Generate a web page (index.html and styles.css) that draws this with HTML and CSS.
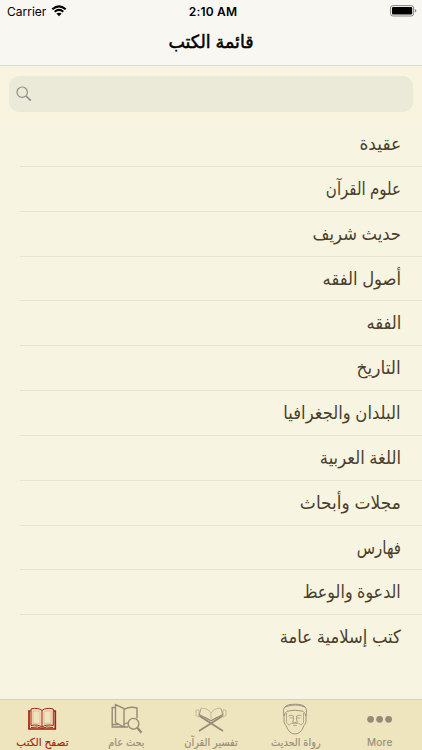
FILE: index.html
```html
<!DOCTYPE html>
<html lang="ar">
<head>
  <meta charset="UTF-8" />
  <meta name="viewport" content="width=device-width, initial-scale=1.0"/>
  <title>قائمة الكتب</title>
  <link rel="stylesheet" href="styles.css">
</head>
<body>
  <header class="header">
    <div class="status-bar">
      <div class="carrier">
        <span>Carrier</span>
        <svg class="wifi" viewBox="0 0 16 12" width="16" height="12">
          <path d="M1.3 4.2Q8-1.5 14.7 4.2M3.7 6.7Q8 3.2 12.3 6.7" fill="none" stroke="#000" stroke-width="2.1"/>
          <path d="M5.4 8.6Q8 6.7 10.6 8.6L8 11.2z"/>
        </svg>
      </div>
      <span class="time">2:10 AM</span>
      <div class="battery">
        <svg viewBox="0 0 27 12" width="27" height="12">
          <rect x=".6" y=".6" width="23" height="10.4" rx="2.3" fill="none" stroke="#858580"/>
          <rect x="2" y="2" width="20.2" height="7.6" rx="1"/>
          <path d="M24.9 4q1.5.5 1.5 1.8t-1.5 1.8z" fill="#858580"/>
        </svg>
      </div>
    </div>
    <h1 class="title" dir="rtl">قائمة الكتب</h1>
  </header>

  <div class="search">
    <div class="search-box">
      <svg viewBox="0 0 16 16" width="16" height="16" fill="none" stroke="#8e8e89">
        <circle cx="6.2" cy="6.2" r="5.2" stroke-width="1.2"/>
        <path d="M10 10l4.8 4.6" stroke-width="1.7"/>
      </svg>
    </div>
  </div>

  <ul class="list" dir="rtl">
    <li><span class="wide">عقيدة</span></li>
    <li><span class="narrow">علوم القرآن</span></li>
    <li><span>حديث شريف</span></li>
    <li><span>أصول الفقه</span></li>
    <li><span>الفقه</span></li>
    <li><span class="wide">التاريخ</span></li>
    <li><span>البلدان والجغرافيا</span></li>
    <li><span>اللغة العربية</span></li>
    <li><span class="wide">مجلات وأبحاث</span></li>
    <li><span class="narrow">فهارس</span></li>
    <li><span class="medium">الدعوة والوعظ</span></li>
    <li><span>كتب إسلامية عامة</span></li>
  </ul>

  <nav class="tabs">
    <div class="tab active">
      <svg viewBox="0 0 32 32" width="32" height="32" fill="none" stroke="currentColor">
        <path d="M4.5 8H3V26h26.3V8h-1.5" stroke-width="1.7"/>
        <path d="M5 6Q12 4.2 16 7.5 20 4.2 27.3 6V22.5Q20 21 16 24 12 21 5 22.5z"/>
        <path d="M16 7.5v17M5 24.5q7-1.4 11 .8 4-2.2 11-.8" stroke-width="1"/>
        <path d="M7 8q5-1 7 1V21q-3-1.5-7-.6zM25 8q-5-1-7 1V21q3-1.5 7-.6z" stroke-width=".5" opacity=".4"/>
      </svg>
      <span dir="rtl">تصفح الكتب</span>
    </div>
    <div class="tab">
      <svg viewBox="0 0 32 32" width="32" height="32" fill="none" stroke="currentColor" stroke-width="1.4">
        <path d="M4.5 4.5H1.2V24H12M4.5 19.5V1.5l8.5 4V24L4.5 19.5M13 6.5Q19 3 26 5v10.5M13 21.5q2-1.6 4-1.6M13 24h4M1.2 21.5h6"/>
        <circle cx="22.5" cy="20.8" r="5.4"/>
        <path d="M26.3 24.8l4.2 5" stroke-width="2.3"/>
      </svg>
      <span dir="rtl">بحث عام</span>
    </div>
    <div class="tab">
      <svg viewBox="0 0 32 32" width="32" height="32" fill="none" stroke="currentColor">
        <path d="M4 6.5l-3 1v5l3 1.5M28 6.5l3 1v5l-3 1.5M4 12L6 5.2Q13 5 16 10 19 5 26 5.2L28 12M16 10v6M4 7v6l2-7M28 7v6l-2-7" stroke-width=".9" opacity=".55"/>
        <path d="M4 11.5L16 17.8 28 11.5" stroke-width="1.3"/>
        <path d="M4.5 13L28 28M27.5 13L4 28" stroke-width="1.7"/>
        <path d="M10 14l6 3.8 6-3.8" opacity=".6"/>
      </svg>
      <span dir="rtl">تفسير القرآن</span>
    </div>
    <div class="tab">
      <svg viewBox="0 0 32 32" width="32" height="32" fill="none" stroke="currentColor" stroke-width=".9">
        <path d="M5 13Q3.500 6 6 4 16 0 26 4 28.500 6 27 13 26 9.500 24 8.200 16 6.200 8 8.200 6 9.500 5 13z"/>
        <path d="M6 4Q8 1.200 16 1.200T26 4M5 12v7q.8 2.500 2 3.500Q10 31 16 31t9-8.500Q26.200 21.500 27 19v-7"/>
        <path d="M7.500 10v9.500q1 1.500 2.500 2.500 2-3 6-1.200Q20 19 22 22q1.500-1 2.500-2.500V10" opacity=".75"/>
        <path d="M9.500 13q2.500-1.800 5 0M17.500 13q2.500-1.800 5 0M14.500 13v4l-1 2q2.500 1.200 5 0l-1-2v-4" opacity=".8"/>
        <path d="M10.500 15h3.500M18 15h3.500M14 22.600h4" opacity=".7"/>
      </svg>
      <span dir="rtl">رواة الحديث</span>
    </div>
    <div class="tab more">
      <svg viewBox="0 0 32 32" width="32" height="32" fill="currentColor">
        <circle cx="6.600" cy="16.300" r="3.400"/>
        <circle cx="15.600" cy="16.300" r="3.400"/>
        <circle cx="24.600" cy="16.300" r="3.400"/>
      </svg>
      <span>More</span>
    </div>
  </nav>
</body>
</html>
```
FILE: styles.css
```css
* {
  box-sizing: border-box;
}

body {
  margin: 0;
  height: 750px;
  overflow: hidden;
  display: flex;
  flex-direction: column;
  background-color: #f7f4e1;
  font-family: Inter, "DejaVu Sans", sans-serif;
}

svg {
  display: block;
}

.header {
  height: 66px;
  background-color: #f8f7f2;
  border-bottom: 1px solid #d8d7d0;
}

.status-bar {
  height: 22px;
  padding: 0 5px 0 7px;
  display: grid;
  grid-template-columns: 1fr auto 1fr;
  align-items: center;
  font-size: 12px;
}

.carrier {
  display: flex;
  align-items: center;
  gap: 4px;
}

.carrier svg {
  margin-left: 1px;
}

.time {
  padding-left: 2px;
  font-weight: 600;
  letter-spacing: 0.2px;
}

.battery {
  display: flex;
  justify-content: flex-end;
}

.title {
  margin: 0;
  line-height: 40px;
  text-align: center;
  font-size: 18px;
  font-weight: 400;
  -webkit-text-stroke: 0.5px #000;
  transform: scaleX(0.97);
}

.search {
  height: 56px;
  padding: 10px 9px;
  background-color: #f8f4df;
}

.search-box {
  height: 36px;
  padding: 10px 7px;
  border-radius: 10px;
  background-color: #ebe9d8;
}

.list {
  flex: 1;
  margin: 0;
  padding: 0;
  list-style: none;
  color: #4b3e2c;
  font-size: 18px;
}

.list li {
  height: 44.85px;
  margin-left: 20px;
  padding-right: 21px;
  line-height: 44px;
  border-bottom: 1px solid #e7e4d4;
  white-space: nowrap;
}

.list li:last-child {
  border-bottom: none;
}

.list span {
  display: inline-block;
  transform: scaleX(0.912);
  transform-origin: right;
}

.list .narrow {
  transform: scaleX(0.835);
}

.list .medium {
  transform: scaleX(0.885);
}

.list .wide {
  transform: scaleX(0.945);
}

.tabs {
  height: 51px;
  padding-top: 3px;
  display: grid;
  grid-template-columns: repeat(5, 1fr);
  background-color: #eee5bf;
  border-top: 1px solid #d5d1bb;
  color: #958b77;
}

.tab {
  display: flex;
  flex-direction: column;
  align-items: center;
  font-size: 11px;
  line-height: 14px;
  white-space: nowrap;
}

.tab span {
  transform: scaleX(0.89);
  -webkit-text-stroke: 0.15px currentColor;
}

.tab.active {
  color: #a71e12;
}

.tab.active span {
  transform: scaleX(0.95);
}

.tab.more span {
  font-size: 10px;
  letter-spacing: 0.3px;
  transform: none;
}
```
